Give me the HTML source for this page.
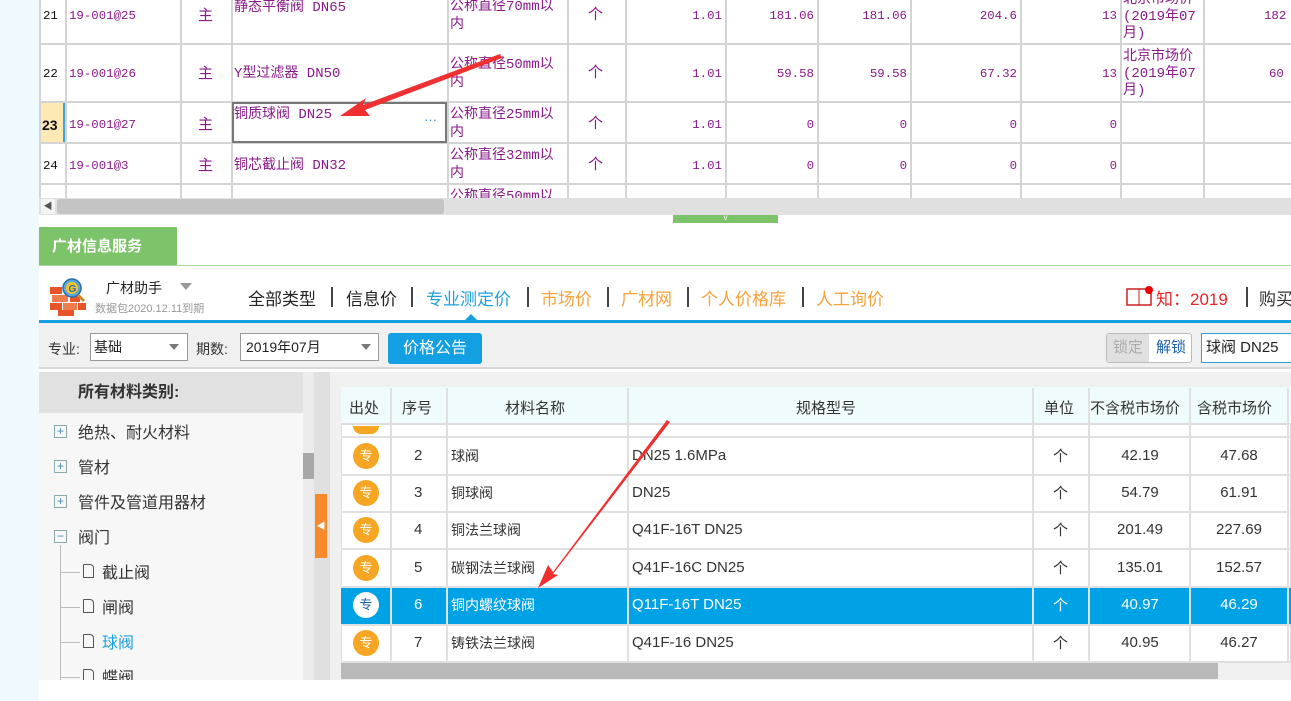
<!DOCTYPE html>
<html><head><meta charset="utf-8">
<style>
*{margin:0;padding:0;box-sizing:border-box}
body{width:1291px;height:701px;overflow:hidden;background:#fff;position:relative;font-family:"Liberation Sans","Noto Sans CJK SC",sans-serif}
.a{position:absolute}
.m{font-family:"Liberation Mono","Noto Sans CJK SC",monospace;font-size:12.4px;color:#8a1a8a;line-height:16px}
.hl{position:absolute;left:39px;right:0;height:2px;background:#d4d4d4}
.vl{position:absolute;width:2px;background:#d4d4d4}
.r{text-align:right}
.t{position:absolute;font-size:16px;color:#333;white-space:nowrap}
.bh{position:absolute;font-size:15px;color:#333;white-space:nowrap}
.nv{position:absolute;top:285px;font-size:17px;white-space:nowrap}
.sp{position:absolute;top:287px;width:2px;height:20px;background:#444}
.icon{position:absolute;width:26px;height:26px;border-radius:50%;background:#f6a623;color:#fff;font-size:13px;text-align:center;line-height:26px}
</style></head><body>
<div class="a" style="left:0;top:0;width:39px;height:701px;background:#eefafd"></div>

<div class="a" style="left:39px;top:0;width:1252px;height:198px;background:#fff"></div>
<div class="a" style="left:39px;top:102px;width:26px;height:41px;background:#fde9b4;border-right:2px solid #3ba7d8"></div>
<div class="hl" style="top:43px"></div><div class="hl" style="top:101px"></div><div class="hl" style="top:142px"></div><div class="hl" style="top:183px"></div>
<div class="vl" style="left:39px;top:0;height:198px"></div>
<div class="vl" style="left:65px;top:0;height:198px"></div>
<div class="vl" style="left:180px;top:0;height:198px"></div>
<div class="vl" style="left:231px;top:0;height:198px"></div>
<div class="vl" style="left:447px;top:0;height:198px"></div>
<div class="vl" style="left:567px;top:0;height:198px"></div>
<div class="vl" style="left:625px;top:0;height:198px"></div>
<div class="vl" style="left:725px;top:0;height:198px"></div>
<div class="vl" style="left:817px;top:0;height:198px"></div>
<div class="vl" style="left:910px;top:0;height:198px"></div>
<div class="vl" style="left:1020px;top:0;height:198px"></div>
<div class="vl" style="left:1120px;top:0;height:198px"></div>
<div class="vl" style="left:1203px;top:0;height:198px"></div>
<div class="a" style="left:232px;top:102px;width:215px;height:41px;border:2px solid #777"></div>

<div class="a m" style="left:43px;top:8px;color:#111">21</div>
<div class="a m" style="left:43px;top:66px;color:#111">22</div>
<div class="a m" style="left:42px;top:117px;color:#111;font-weight:bold;font-family:'Liberation Sans';font-size:14px">23</div>
<div class="a m" style="left:43px;top:158px;color:#111">24</div>
<div class="a m" style="left:69px;top:8px">19-001@25</div>
<div class="a m" style="left:69px;top:66px">19-001@26</div>
<div class="a m" style="left:69px;top:117px">19-001@27</div>
<div class="a m" style="left:69px;top:158px">19-001@3</div>
<div class="a m" style="left:198px;top:9px;font-size:15px">主</div>
<div class="a m" style="left:198px;top:67px;font-size:15px">主</div>
<div class="a m" style="left:198px;top:118px;font-size:15px">主</div>
<div class="a m" style="left:198px;top:159px;font-size:15px">主</div>
<div class="a m" style="left:234px;top:0px;font-size:14px">静态平衡阀 DN65</div>
<div class="a m" style="left:234px;top:66px;font-size:14px">Y型过滤器 DN50</div>
<div class="a m" style="left:234px;top:107px;font-size:14px">铜质球阀 DN25</div>
<div class="a" style="left:424px;top:112px;color:#3b8fd8;font-size:13px">···</div>
<div class="a m" style="left:234px;top:158px;font-size:14px">铜芯截止阀 DN32</div>
<div class="a m" style="left:450px;top:-2px;font-size:14px;line-height:18px">公称直径70mm以<br>内</div>
<div class="a m" style="left:450px;top:56px;font-size:14px;line-height:18px">公称直径50mm以<br>内</div>
<div class="a m" style="left:450px;top:106px;font-size:14px;line-height:18px">公称直径25mm以<br>内</div>
<div class="a m" style="left:450px;top:147px;font-size:14px;line-height:18px">公称直径32mm以<br>内</div>
<div class="a m" style="left:450px;top:188px;font-size:14px;line-height:18px">公称直径50mm以</div>
<div class="a m" style="left:588px;top:8px;font-size:15px">个</div>
<div class="a m" style="left:588px;top:66px;font-size:15px">个</div>
<div class="a m" style="left:588px;top:117px;font-size:15px">个</div>
<div class="a m" style="left:588px;top:158px;font-size:15px">个</div>
<div class="a m r" style="left:626px;width:96px;top:8px">1.01</div>
<div class="a m r" style="left:726px;width:88px;top:8px">181.06</div>
<div class="a m r" style="left:818px;width:89px;top:8px">181.06</div>
<div class="a m r" style="left:911px;width:106px;top:8px">204.6</div>
<div class="a m r" style="left:1021px;width:96px;top:8px">13</div>
<div class="a m" style="left:1264px;top:8px">182</div>
<div class="a m r" style="left:626px;width:96px;top:66px">1.01</div>
<div class="a m r" style="left:726px;width:88px;top:66px">59.58</div>
<div class="a m r" style="left:818px;width:89px;top:66px">59.58</div>
<div class="a m r" style="left:911px;width:106px;top:66px">67.32</div>
<div class="a m r" style="left:1021px;width:96px;top:66px">13</div>
<div class="a m" style="left:1269px;top:66px">60</div>
<div class="a m r" style="left:626px;width:96px;top:117px">1.01</div>
<div class="a m r" style="left:726px;width:88px;top:117px">0</div>
<div class="a m r" style="left:818px;width:89px;top:117px">0</div>
<div class="a m r" style="left:911px;width:106px;top:117px">0</div>
<div class="a m r" style="left:1021px;width:96px;top:117px">0</div>
<div class="a m r" style="left:626px;width:96px;top:158px">1.01</div>
<div class="a m r" style="left:726px;width:88px;top:158px">0</div>
<div class="a m r" style="left:818px;width:89px;top:158px">0</div>
<div class="a m r" style="left:911px;width:106px;top:158px">0</div>
<div class="a m r" style="left:1021px;width:96px;top:158px">0</div>
<div class="a m" style="left:1123px;top:-8px;font-size:14px;line-height:17px">北京市场价<br>(2019年07<br>月)</div>
<div class="a m" style="left:1123px;top:49px;font-size:14px;line-height:17px">北京市场价<br>(2019年07<br>月)</div>
<div class="a" style="left:39px;top:198px;width:1252px;height:17px;background:#e0e0e0"></div>
<div class="a" style="left:41px;top:199px;width:14px;height:15px;background:#f4f4f4;font-size:9px;color:#555;text-align:center;line-height:15px">◀</div>
<div class="a" style="left:57px;top:199px;width:387px;height:15px;background:#c4c4c4;border-radius:3px"></div>
<div class="a" style="left:673px;top:215px;width:105px;height:8px;background:#7dc36a;color:#fff;font-size:8px;text-align:center;line-height:6px">v</div>

<div class="a" style="left:39px;top:227px;width:138px;height:39px;background:#7dc36a;color:#fff;font-weight:bold;font-size:15px;line-height:39px;padding-left:13px">广材信息服务</div>
<div class="a" style="left:39px;top:265px;width:1252px;height:1px;background:#a9d99c"></div>

<svg class="a" style="left:50px;top:277px" width="40" height="40" viewBox="0 0 40 40">
<rect x="0" y="10" width="12" height="7" fill="#e8542a"/><rect x="2" y="18" width="16" height="7" fill="#f07b4d"/><rect x="0" y="26" width="12" height="7" fill="#e8542a"/><rect x="13" y="26" width="14" height="7" fill="#f07b4d"/><rect x="28" y="26" width="8" height="7" fill="#e8542a"/><rect x="8" y="33" width="16" height="6" fill="#e8542a"/><rect x="20" y="18" width="10" height="7" fill="#e8542a"/>
<circle cx="22" cy="11" r="9" fill="#5aa8e0" stroke="#2a6db0" stroke-width="1.5"/><circle cx="22" cy="11" r="6" fill="#f6c425"/><text x="18.5" y="15" font-size="10" font-weight="bold" fill="#2a6db0" font-family="Liberation Sans">G</text><line x1="28" y1="18" x2="34" y2="24" stroke="#c98a2a" stroke-width="3"/>
</svg>
<div class="bh" style="left:106px;top:278px;font-size:14px;color:#222">广材助手</div>
<div class="a" style="left:180px;top:283px;width:0;height:0;border-left:6px solid transparent;border-right:6px solid transparent;border-top:7px solid #999"></div>
<div class="bh" style="left:95px;top:300px;font-size:11px;color:#999">数据包2020.12.11到期</div>
<div class="nv" style="left:248px;color:#222">全部类型</div>
<div class="sp" style="left:331px"></div>
<div class="nv" style="left:346px;color:#222">信息价</div>
<div class="sp" style="left:411px"></div>
<div class="nv" style="left:426px;color:#1ea0df">专业测定价</div>
<div class="sp" style="left:527px"></div>
<div class="nv" style="left:541px;color:#f7a23b">市场价</div>
<div class="sp" style="left:607px"></div>
<div class="nv" style="left:621px;color:#f7a23b">广材网</div>
<div class="sp" style="left:687px"></div>
<div class="nv" style="left:701px;color:#f7a23b">个人价格库</div>
<div class="sp" style="left:802px"></div>
<div class="nv" style="left:816px;color:#f7a23b">人工询价</div>
<svg class="a" style="left:1126px;top:285px" width="28" height="22"><rect x="1" y="4" width="24" height="16" fill="#fff" stroke="#c22" stroke-width="1.5"/><line x1="13" y1="4" x2="13" y2="20" stroke="#c22"/><circle cx="23" cy="5" r="4" fill="#e00"/></svg>
<div class="nv" style="left:1156px;color:#e8262a">知：2019</div>
<div class="sp" style="left:1246px"></div>
<div class="nv" style="left:1259px;color:#333">购买</div>
<div class="a" style="left:39px;top:320px;width:1252px;height:3px;background:#12a0e3"></div>
<div class="a" style="left:464px;top:314px;width:0;height:0;border-left:7px solid transparent;border-right:7px solid transparent;border-bottom:7px solid #12a0e3"></div>

<div class="a" style="left:39px;top:323px;width:1252px;height:46px;background:#f0f0f0;border-bottom:2px solid #d8d8d8"></div>
<div class="bh" style="left:48px;top:339px;font-size:14px">专业:</div>
<div class="a" style="left:90px;top:333px;width:98px;height:28px;background:#fff;border:1px solid #999;font-size:14px;padding:3px 3px;color:#222">基础</div>
<div class="a" style="left:169px;top:344px;border-left:5px solid transparent;border-right:5px solid transparent;border-top:6px solid #777"></div>
<div class="bh" style="left:196px;top:339px;font-size:14px">期数:</div>
<div class="a" style="left:240px;top:333px;width:139px;height:28px;background:#fff;border:1px solid #999;font-size:14px;padding:3px 5px;color:#222">2019年07月</div>
<div class="a" style="left:361px;top:344px;border-left:5px solid transparent;border-right:5px solid transparent;border-top:6px solid #777"></div>
<div class="a" style="left:388px;top:333px;width:94px;height:31px;background:#12a0e3;color:#fff;border-radius:3px;font-size:16px;text-align:center;line-height:31px">价格公告</div>
<div class="a" style="left:1106px;top:333px;width:86px;height:30px;border:1px solid #bbb;border-radius:3px;background:#fff"></div>
<div class="a" style="left:1107px;top:334px;width:42px;height:28px;background:#e0e0e0;color:#aaa;font-size:15px;line-height:28px;text-align:center">锁定</div>
<div class="a" style="left:1150px;top:334px;width:42px;height:28px;color:#1c5fa8;font-size:15px;line-height:28px;text-align:center">解锁</div>
<div class="a" style="left:1201px;top:333px;width:95px;height:30px;border:1px solid #29a3e0;background:#fff;font-size:15px;line-height:28px;padding-left:4px;color:#222">球阀 DN25</div>

<div class="a" style="left:39px;top:372px;width:275px;height:308px;background:#f7f7f7"></div>
<div class="a" style="left:39px;top:372px;width:264px;height:41px;background:#e1e1e1;font-weight:bold;font-size:16px;color:#333;line-height:41px;padding-left:39px">所有材料类别:</div>
<div class="a" style="left:303px;top:372px;width:11px;height:308px;background:#ececec"></div>
<div class="a" style="left:303px;top:453px;width:11px;height:26px;background:#a8a8a8"></div>
<div class="a" style="left:314px;top:372px;width:16px;height:308px;background:#e0e0e0"></div>
<div class="a" style="left:315px;top:494px;width:12px;height:64px;background:#f78a2c;color:#fff;font-size:9px;line-height:64px;text-align:center">◀</div>
<div class="a" style="left:54px;top:425px;width:13px;height:13px;border:1px solid #8aa;color:#4a88b8;font-size:12px;line-height:10px;text-align:center">+</div>
<div class="t" style="left:78px;top:419px">绝热、耐火材料</div>
<div class="a" style="left:54px;top:460px;width:13px;height:13px;border:1px solid #8aa;color:#4a88b8;font-size:12px;line-height:10px;text-align:center">+</div>
<div class="t" style="left:78px;top:454px">管材</div>
<div class="a" style="left:54px;top:495px;width:13px;height:13px;border:1px solid #8aa;color:#4a88b8;font-size:12px;line-height:10px;text-align:center">+</div>
<div class="t" style="left:78px;top:489px">管件及管道用器材</div>
<div class="a" style="left:54px;top:530px;width:13px;height:13px;border:1px solid #8aa;color:#4a88b8;font-size:12px;line-height:10px;text-align:center">−</div>
<div class="t" style="left:78px;top:524px">阀门</div>
<div class="a" style="left:60px;top:545px;width:1px;height:135px;background:#bbb"></div>
<div class="a" style="left:60px;top:572px;width:20px;height:1px;background:#bbb"></div>
<div class="a" style="left:60px;top:607px;width:20px;height:1px;background:#bbb"></div>
<div class="a" style="left:60px;top:642px;width:20px;height:1px;background:#bbb"></div>
<div class="a" style="left:60px;top:677px;width:20px;height:1px;background:#bbb"></div>
<div class="a" style="left:83px;top:564px;width:11px;height:14px;border:1px solid #555;border-radius:1px 4px 0 0"></div>
<div class="t" style="left:102px;top:559px">截止阀</div>
<div class="a" style="left:83px;top:599px;width:11px;height:14px;border:1px solid #555;border-radius:1px 4px 0 0"></div>
<div class="t" style="left:102px;top:594px">闸阀</div>
<div class="a" style="left:83px;top:634px;width:11px;height:14px;border:1px solid #555;border-radius:1px 4px 0 0"></div>
<div class="t" style="left:102px;top:629px;color:#1ea0df">球阀</div>
<div class="a" style="left:83px;top:669px;width:11px;height:11px;border:1px solid #555;border-bottom:none;border-radius:1px 4px 0 0"></div>
<div class="a" style="left:102px;top:664px;height:16px;overflow:hidden;font-size:16px;color:#333">蝶阀</div>

<div class="a" style="left:330px;top:372px;width:961px;height:308px;background:#f0f0f0"></div>
<div class="a" style="left:341px;top:387px;width:950px;height:276px;background:#fff;border:1px solid #ddd"></div>
<div class="a" style="left:341px;top:387px;width:950px;height:38px;background:#effbfd;border-bottom:2px solid #dcdcdc"></div>
<div class="a" style="left:341px;top:587px;width:950px;height:37px;background:#00a2e6"></div>
<div class="a" style="left:341px;top:436px;width:950px;height:2px;background:#e0e0e0"></div>
<div class="a" style="left:341px;top:474px;width:950px;height:2px;background:#e0e0e0"></div>
<div class="a" style="left:341px;top:511px;width:950px;height:2px;background:#e0e0e0"></div>
<div class="a" style="left:341px;top:548px;width:950px;height:2px;background:#e0e0e0"></div>
<div class="a" style="left:341px;top:586px;width:950px;height:2px;background:#e0e0e0"></div>
<div class="a" style="left:341px;top:624px;width:950px;height:2px;background:#e0e0e0"></div>
<div class="a" style="left:341px;top:661px;width:950px;height:2px;background:#e0e0e0"></div>
<div class="vl" style="left:390px;top:388px;height:274px;background:#e0e0e0"></div>
<div class="vl" style="left:446px;top:388px;height:274px;background:#e0e0e0"></div>
<div class="vl" style="left:627px;top:388px;height:274px;background:#e0e0e0"></div>
<div class="vl" style="left:1032px;top:388px;height:274px;background:#e0e0e0"></div>
<div class="vl" style="left:1088px;top:388px;height:274px;background:#e0e0e0"></div>
<div class="vl" style="left:1189px;top:388px;height:274px;background:#e0e0e0"></div>
<div class="vl" style="left:1287px;top:388px;height:274px;background:#e0e0e0"></div>
<div class="bh" style="left:349px;top:397px">出处</div>
<div class="bh" style="left:402px;top:397px">序号</div>
<div class="bh" style="left:505px;top:397px">材料名称</div>
<div class="bh" style="left:796px;top:397px">规格型号</div>
<div class="bh" style="left:1044px;top:397px">单位</div>
<div class="bh" style="left:1090px;top:397px">不含税市场价</div>
<div class="bh" style="left:1197px;top:397px">含税市场价</div>
<div class="a" style="left:353px;top:426px;width:26px;height:8px;background:#f6a623;border-radius:0 0 13px 13px"></div>

<div class="icon" style="left:353px;top:443px">专</div>
<div class="icon" style="left:353px;top:480px">专</div>
<div class="icon" style="left:353px;top:517px">专</div>
<div class="icon" style="left:353px;top:555px">专</div>
<div class="icon" style="left:353px;top:592px;background:#fff;color:#1c5fa8">专</div>
<div class="icon" style="left:353px;top:630px">专</div>

<div class="bh" style="left:414px;top:447px">2</div>
<div class="bh" style="left:414px;top:484px">3</div>
<div class="bh" style="left:414px;top:521px">4</div>
<div class="bh" style="left:414px;top:559px">5</div>
<div class="bh" style="left:414px;top:596px;color:#fff">6</div>
<div class="bh" style="left:414px;top:634px">7</div>
<div class="bh" style="left:451px;top:446px;font-size:14px">球阀</div>
<div class="bh" style="left:451px;top:483px;font-size:14px">铜球阀</div>
<div class="bh" style="left:451px;top:520px;font-size:14px">铜法兰球阀</div>
<div class="bh" style="left:451px;top:558px;font-size:14px">碳钢法兰球阀</div>
<div class="bh" style="left:451px;top:595px;font-size:14px;color:#fff">铜内螺纹球阀</div>
<div class="bh" style="left:451px;top:633px;font-size:14px">铸铁法兰球阀</div>
<div class="bh" style="left:632px;top:447px">DN25 1.6MPa</div>
<div class="bh" style="left:632px;top:484px">DN25</div>
<div class="bh" style="left:632px;top:521px">Q41F-16T DN25</div>
<div class="bh" style="left:632px;top:559px">Q41F-16C DN25</div>
<div class="bh" style="left:632px;top:596px;color:#fff">Q11F-16T DN25</div>
<div class="bh" style="left:632px;top:634px">Q41F-16 DN25</div>
<div class="bh" style="left:1053px;top:445px">个</div>
<div class="bh" style="left:1053px;top:482px">个</div>
<div class="bh" style="left:1053px;top:519px">个</div>
<div class="bh" style="left:1053px;top:557px">个</div>
<div class="bh" style="left:1053px;top:594px;color:#fff">个</div>
<div class="bh" style="left:1053px;top:632px">个</div>
<div class="bh" style="left:1090px;width:100px;text-align:center;top:447px">42.19</div>
<div class="bh" style="left:1090px;width:100px;text-align:center;top:484px">54.79</div>
<div class="bh" style="left:1090px;width:100px;text-align:center;top:521px">201.49</div>
<div class="bh" style="left:1090px;width:100px;text-align:center;top:559px">135.01</div>
<div class="bh" style="left:1090px;width:100px;text-align:center;top:596px;color:#fff">40.97</div>
<div class="bh" style="left:1090px;width:100px;text-align:center;top:634px">40.95</div>
<div class="bh" style="left:1190px;width:98px;text-align:center;top:447px">47.68</div>
<div class="bh" style="left:1190px;width:98px;text-align:center;top:484px">61.91</div>
<div class="bh" style="left:1190px;width:98px;text-align:center;top:521px">227.69</div>
<div class="bh" style="left:1190px;width:98px;text-align:center;top:559px">152.57</div>
<div class="bh" style="left:1190px;width:98px;text-align:center;top:596px;color:#fff">46.29</div>
<div class="bh" style="left:1190px;width:98px;text-align:center;top:634px">46.27</div>
<div class="a" style="left:341px;top:663px;width:950px;height:16px;background:#f0f0f0"></div>
<div class="a" style="left:341px;top:663px;width:877px;height:16px;background:#b9b9b9"></div>
<div class="a" style="left:39px;top:680px;width:1252px;height:21px;background:#fff"></div>

<svg class="a" style="left:0;top:0" width="1291" height="701">
<polygon points="500,54 363,105 366,98 340,116 370,116 365,110 502,58" fill="#f03030"/>
<polygon points="667,420 553,572 548,565 538,588 558,575 553,574 670,422" fill="#f03030"/>
</svg>
</body></html>
